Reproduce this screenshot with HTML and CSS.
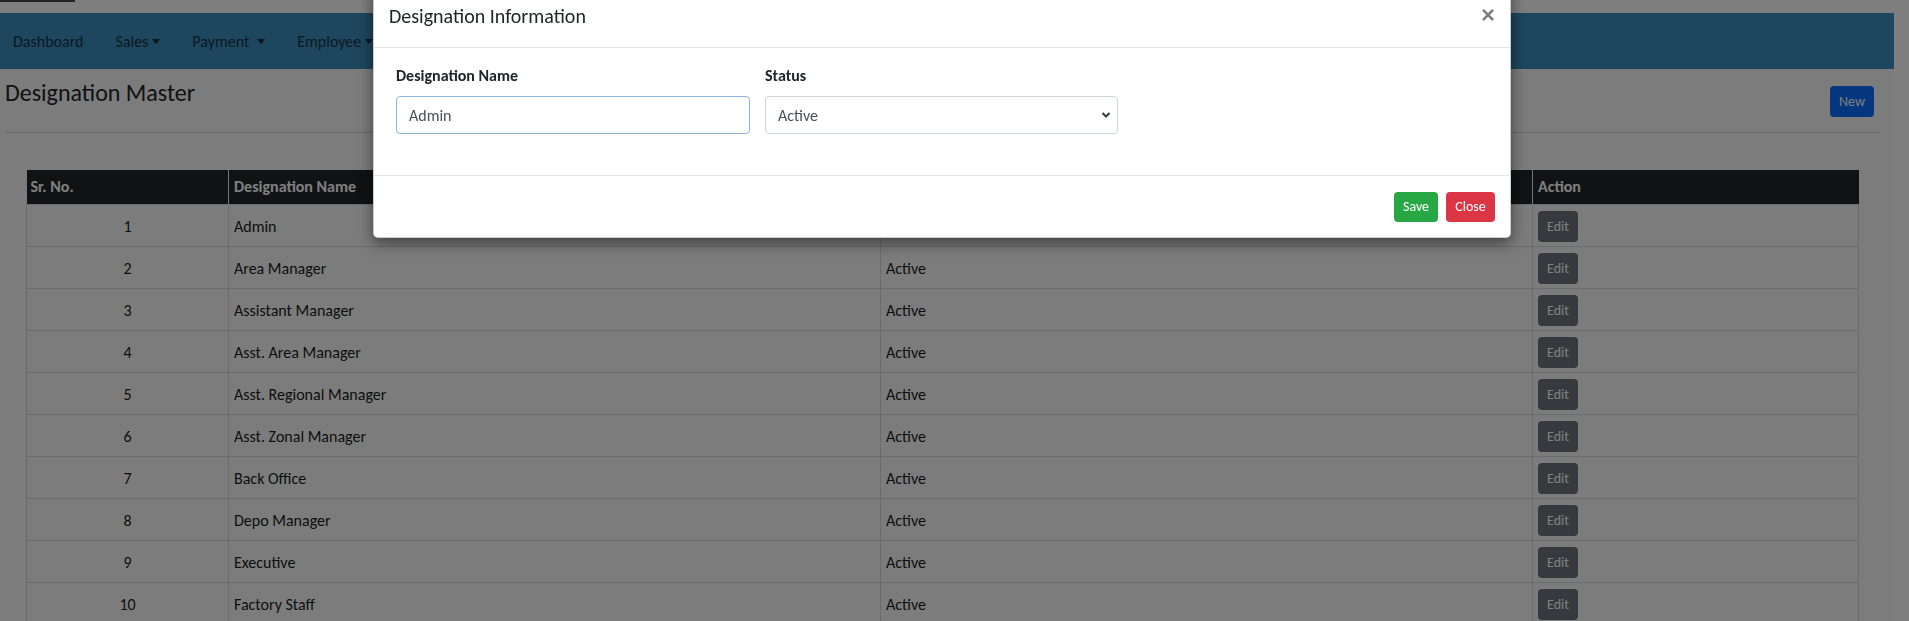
FILE: index.html
```html
<!DOCTYPE html>
<html lang="en">
<head>
<meta charset="utf-8">
<title>Designation Master</title>
<link rel="stylesheet" href="styles.css">
</head>
<body>
<div class="page">
  <div class="topstrip"><span class="topblock"></span></div>
  <nav class="navbar">
    <a class="nav-link">Dashboard</a>
    <a class="nav-link dd">Sales</a>
    <a class="nav-link dd spaced">Payment</a>
    <a class="nav-link dd">Employee</a>
  </nav>
  <div class="page-head">
    <h3 class="title">Designation Master</h3>
    <button class="btn btn-primary">New</button>
  </div>
  <hr class="rule">
  <div class="table-wrap">
    <table class="grid">
      <colgroup>
        <col class="c-sr"><col class="c-name"><col class="c-status"><col class="c-action">
      </colgroup>
      <thead>
        <tr><th>Sr. No.</th><th>Designation Name</th><th>Status</th><th>Action</th></tr>
      </thead>
      <tbody>
        <tr><td class="num">1</td><td>Admin</td><td>Active</td><td><button class="btn btn-edit">Edit</button></td></tr>
        <tr><td class="num">2</td><td>Area Manager</td><td>Active</td><td><button class="btn btn-edit">Edit</button></td></tr>
        <tr><td class="num">3</td><td>Assistant Manager</td><td>Active</td><td><button class="btn btn-edit">Edit</button></td></tr>
        <tr><td class="num">4</td><td>Asst. Area Manager</td><td>Active</td><td><button class="btn btn-edit">Edit</button></td></tr>
        <tr><td class="num">5</td><td>Asst. Regional Manager</td><td>Active</td><td><button class="btn btn-edit">Edit</button></td></tr>
        <tr><td class="num">6</td><td>Asst. Zonal Manager</td><td>Active</td><td><button class="btn btn-edit">Edit</button></td></tr>
        <tr><td class="num">7</td><td>Back Office</td><td>Active</td><td><button class="btn btn-edit">Edit</button></td></tr>
        <tr><td class="num">8</td><td>Depo Manager</td><td>Active</td><td><button class="btn btn-edit">Edit</button></td></tr>
        <tr><td class="num">9</td><td>Executive</td><td>Active</td><td><button class="btn btn-edit">Edit</button></td></tr>
        <tr><td class="num">10</td><td>Factory Staff</td><td>Active</td><td><button class="btn btn-edit">Edit</button></td></tr>
      </tbody>
    </table>
  </div>
</div>

<div class="backdrop"></div>

<div class="modal-dialog">
  <div class="modal-header">
    <h5 class="modal-title">Designation Information</h5>
    <button class="close" aria-label="Close">&times;</button>
  </div>
  <div class="modal-body">
    <div class="field name-field">
      <label class="label">Designation Name</label>
      <input class="control input-focus" type="text" value="Admin">
    </div>
    <div class="field status-field">
      <label class="label">Status</label>
      <div class="control select">
        <span>Active</span>
        <svg class="chev" width="10" height="8" viewBox="0 0 10 8"><path d="M1.5 2 L5 5.5 L8.5 2" fill="none" stroke="#343a40" stroke-width="2"/></svg>
      </div>
    </div>
  </div>
  <div class="modal-footer">
    <button class="btn btn-success">Save</button>
    <button class="btn btn-danger">Close</button>
  </div>
</div>
</body>
</html>
```

FILE: styles.css
```css
* { box-sizing: border-box; }
html, body { margin: 0; padding: 0; }
body {
  font-family: Carlito, Calibri, "Open Sans", Lato, sans-serif;
  font-size: 16px;
  color: #212529;
  background: #ffffff;
  width: 1909px;
  height: 621px;
  overflow: hidden;
  padding-right: 15px;
}
.page {
  width: 1894px;
  height: 621px;
  background: #f8f9fa;
}
.topstrip {
  height: 13px;
  background: #ffffff;
  display: flex;
}
.topblock {
  width: 75px;
  height: 2px;
  background: #444;
}
.navbar {
  height: 56px;
  background: #3c8dbc;
  display: flex;
  align-items: center;
  padding-left: 13px;
}
.nav-link {
  color: rgba(0,0,0,.68);
  font-size: 16px;
  margin-right: 32px;
  display: inline-flex;
  align-items: center;
}
.nav-link.dd::after {
  content: "";
  display: inline-block;
  margin-left: 4px;
  border-top: 5px solid rgba(0,0,0,.68);
  border-left: 4px solid transparent;
  border-right: 4px solid transparent;
}
.nav-link.spaced::after { margin-left: 8px; }
.page-head {
  display: flex;
  justify-content: space-between;
  align-items: flex-start;
  padding: 10px 20px 0 5px;
  height: 63px;
}
.title {
  margin: 0;
  font-size: 24px;
  font-weight: 400;
  line-height: 28px;
}
.btn {
  font-family: inherit;
  border: 1px solid transparent;
  border-radius: 4px;
  font-size: 14px;
  line-height: 21px;
  padding: 4px 8px;
  color: #fff;
  cursor: pointer;
}
.btn-primary {
  background: #0d6efd;
  margin-top: 7px;
  height: 31px;
  width: 44px;
  padding: 4px 0;
}
.rule {
  margin: 0 14px 0 5px;
  border: 0;
  border-top: 1px solid #d2d4d6;
}
.table-wrap {
  padding: 37px 36px 0 26px;
}
.grid {
  width: 1832px;
  border-collapse: collapse;
  table-layout: fixed;
}
.c-sr { width: 202px; }
.c-name { width: 652px; }
.c-status { width: 652px; }
.c-action { width: 326px; }
.grid th {
  background: #212529;
  color: #ffffff;
  text-align: left;
  font-weight: 700;
  height: 34px;
  padding: 0 5px;
  border-left: 1px solid #e9ecef;
}
.grid th:first-child { border-left: 0; padding-left: 4px; }
.grid td {
  border: 1px solid #d6d8da;
  padding: 6px 5px 4px;
  vertical-align: middle;
  height: 41.8px;
  color: #1a1d20;
}
.grid td.num { text-align: center; }
.btn-edit {
  background: #6c757d;
  width: 40px;
  height: 31px;
  padding: 0;
  display: block;
}
.backdrop {
  position: fixed;
  inset: 0;
  background: rgba(0,0,0,.5);
}
.modal-dialog {
  position: absolute;
  left: 373px;
  top: -16px;
  width: 1138px;
  background: #fff;
  border: 1px solid rgba(0,0,0,.2);
  border-radius: 5px;
  box-shadow: 0 5px 15px rgba(0,0,0,.5);
}
.modal-header {
  display: flex;
  justify-content: space-between;
  align-items: center;
  padding: 16px 15px;
  height: 63px;
  border-bottom: 1px solid #e5e5e5;
}
.modal-title {
  margin: 0;
  font-size: 20px;
  font-weight: 400;
  line-height: 30px;
  color: #212529;
}
.close {
  border: 0;
  background: none;
  font-family: Arial, "Liberation Sans", sans-serif;
  font-size: 24px;
  font-weight: 700;
  line-height: 1;
  color: #000;
  opacity: .5;
  padding: 0;
  margin-right: 0;
  margin-top: -3px;
}
.modal-body {
  display: flex;
  gap: 15px;
  padding: 16px 22px 39px;
  height: 127px;
}
.field { display: flex; flex-direction: column; }
.name-field { width: 354px; }
.status-field { width: 353px; }
.label {
  font-weight: 700;
  line-height: 24px;
  margin-bottom: 8px;
}
.control {
  height: 38px;
  border: 1px solid #ced4da;
  border-radius: 4px;
  padding: 0 12px;
  font-family: inherit;
  font-size: 16px;
  color: #495057;
  background: #fff;
}
.input-focus {
  border-color: #8fb5dc;
  outline: none;
}
.select {
  display: flex;
  align-items: center;
  justify-content: space-between;
  padding-right: 6px;
}
.chev { display: block; }
.modal-footer {
  display: flex;
  justify-content: flex-end;
  align-items: center;
  gap: 8px;
  height: 62px;
  padding: 0 15px 0 0;
  border-top: 1px solid #e5e5e5;
}
.btn-success {
  background: #28a745;
  height: 30px;
  width: 44px;
  padding: 0;
}
.btn-danger {
  background: #dc3545;
  height: 30px;
  width: 49px;
  padding: 0;
}
```
